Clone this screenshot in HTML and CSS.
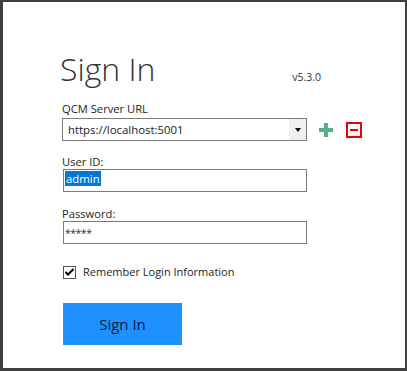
FILE: index.html
```html
<!DOCTYPE html>
<html lang="en">
<head>
  <meta charset="UTF-8">
  <title>Sign In</title>
  <link rel="stylesheet" href="styles.css">
</head>
<body>
  <div class="window">
    <div class="header">
      <h1>Sign In</h1>
      <span class="version">v5.3.0</span>
    </div>

    <label class="field-label">QCM Server URL</label>
    <div class="server-row">
      <div class="select">
        <span class="select-value">https://localhost:5001</span>
        <span class="select-btn"><span class="arrow"></span></span>
      </div>
      <svg class="icon-add" width="14" height="14" viewBox="0 0 14 14">
        <rect x="5" y="0" width="4" height="14" fill="#55b089"/>
        <rect x="0" y="5" width="14" height="4" fill="#55b089"/>
      </svg>
      <svg class="icon-remove" width="16" height="16" viewBox="0 0 16 16">
        <rect x="1" y="1" width="14" height="14" fill="none" stroke="#e8000b" stroke-width="2"/>
        <rect x="4" y="7" width="8" height="2" fill="#e8000b"/>
      </svg>
    </div>

    <label class="field-label user-label">User ID:</label>
    <div class="textbox"><span class="selected">admin</span></div>

    <label class="field-label pass-label">Password:</label>
    <div class="textbox password">*****</div>

    <div class="remember">
      <span class="checkbox">
        <svg width="9" height="8" viewBox="0 0 9 8">
          <path d="M0.5 4 L3 6.5 L8.5 1" fill="none" stroke="#000" stroke-width="2"/>
        </svg>
      </span>
      <span>Remember Login Information</span>
    </div>

    <button class="signin-btn">Sign In</button>
  </div>
</body>
</html>
```

FILE: styles.css
```css
* {
  margin: 0;
  padding: 0;
  box-sizing: border-box;
}

body {
  font-family: 'Open Sans', 'Noto Sans', sans-serif;
  font-size: 11.2px;
  color: #1a1a1a;
  background: #404040;
}

.window {
  width: 407px;
  height: 371px;
  background: #fff;
  border-style: solid;
  border-color: #3f3f3f;
  border-width: 2px 2px 3px 3px;
  padding: 0 0 0 59px;
}

.header {
  display: flex;
  align-items: baseline;
  width: 262px;
  justify-content: space-between;
  margin-top: 47px;
  height: 42px;
}

h1 {
  font-size: 32px;
  font-weight: 300;
  line-height: 40px;
  color: #333;
  margin-left: -2px;
}

.version {
  font-size: 10.5px;
  color: #333;
  margin-right: 3px;
}

.field-label {
  display: block;
  font-size: 11.2px;
  line-height: 16px;
  color: #222;
}

.header + .field-label {
  margin-top: 10px;
}

.server-row {
  display: flex;
  align-items: center;
  margin-top: 1px;
}

.select {
  display: flex;
  width: 245px;
  height: 23px;
  border: 1px solid #7a7a7a;
  align-items: stretch;
}

.select-value {
  flex: 1;
  padding-left: 5px;
  line-height: 21px;
  font-size: 11.4px;
}

.select-btn {
  width: 17px;
  background: #f0f0f0;
  display: flex;
  align-items: center;
  justify-content: center;
}

.arrow {
  width: 0;
  height: 0;
  border-left: 3.5px solid transparent;
  border-right: 3.5px solid transparent;
  border-top: 4px solid #000;
}

.icon-add {
  margin-left: 12px;
}

.icon-remove {
  margin-left: 13px;
}

.user-label {
  margin-top: 13px;
}

.pass-label {
  margin-top: 14px;
}

.textbox {
  width: 244px;
  height: 23px;
  border: 1px solid #7a7a7a;
  margin: -1px 0 0 1px;
  padding: 1px 0 0 1px;
  font-size: 11.4px;
  line-height: 15px;
}

.selected {
  display: inline-block;
  background: #0078d7;
  color: #fff;
  padding: 0 1px;
}

.password {
  padding-top: 4px;
  font-size: 10.5px;
  letter-spacing: -0.5px;
  color: #333;
}

.remember {
  display: flex;
  align-items: center;
  margin-top: 20px;
  margin-left: 1px;
  gap: 7px;
  line-height: 16px;
  font-size: 11px;
  color: #222;
}

.checkbox {
  width: 13px;
  height: 13px;
  border: 1px solid #555;
  display: flex;
  align-items: center;
  justify-content: center;
  background: #fff;
}

.signin-btn {
  display: block;
  margin-top: 23px;
  margin-left: 1px;
  width: 119px;
  height: 42px;
  background: #1e90ff;
  border: none;
  font-family: 'Open Sans', 'Noto Sans', sans-serif;
  font-size: 15px;
  color: #10203a;
}
```
